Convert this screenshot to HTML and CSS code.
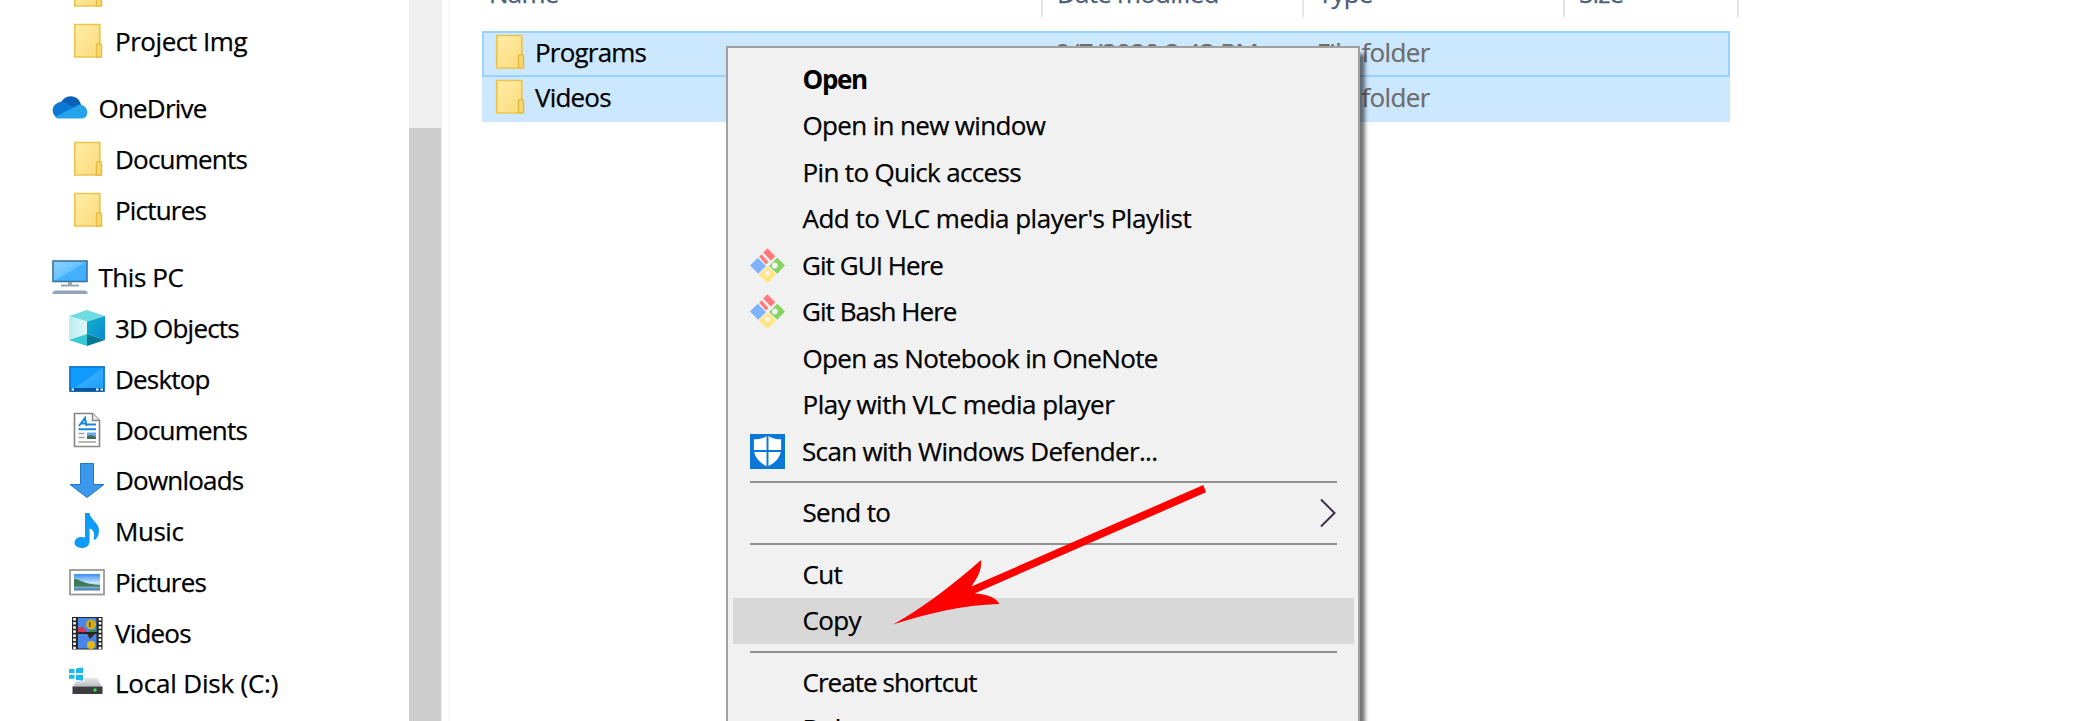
FILE: index.html
```html
<!DOCTYPE html>
<html lang="en">
<head>
<meta charset="utf-8">
<title>File Explorer</title>
<link rel="stylesheet" href="styles.css">
</head>
<body>
<svg width="0" height="0" class="defs">
  <defs>
    <linearGradient id="gFolder" x1="0" y1="0" x2="1" y2="1"><stop offset="0" stop-color="#ffeca6"/><stop offset="1" stop-color="#fbdc7c"/></linearGradient>
    <linearGradient id="gScreen" x1="0" y1="0" x2="1" y2="1"><stop offset="0" stop-color="#8fd4ff"/><stop offset=".5" stop-color="#66c2ff"/><stop offset=".51" stop-color="#45b2ff"/><stop offset="1" stop-color="#3cabfa"/></linearGradient>
    <linearGradient id="gDesk" x1="0" y1="0" x2="1" y2="1"><stop offset="0" stop-color="#109bff"/><stop offset=".5" stop-color="#109bff"/><stop offset=".51" stop-color="#33aaff"/><stop offset="1" stop-color="#1a9dfb"/></linearGradient>
    <linearGradient id="gSky" x1="0" y1="0" x2="0" y2="1"><stop offset="0" stop-color="#3d8cf5"/><stop offset=".55" stop-color="#c9e6fa"/><stop offset="1" stop-color="#3f78a8"/></linearGradient>
    <linearGradient id="gDisk" x1="0" y1="0" x2="0" y2="1"><stop offset="0" stop-color="#e4e5e8"/><stop offset="1" stop-color="#b9bbc0"/></linearGradient>
    <linearGradient id="gCubeL" x1="0" y1="0" x2="1" y2="0"><stop offset="0" stop-color="#b9ecef"/><stop offset="1" stop-color="#e2f7f7"/></linearGradient>
    <linearGradient id="gCubeR" x1="0" y1="0" x2="1" y2="1"><stop offset="0" stop-color="#10b4cf"/><stop offset="1" stop-color="#0a86cf"/></linearGradient>
    <symbol id="folder" viewBox="0 0 36 36"><path d="M5.800 1.500h25v32.500h-25z" fill="url(#gFolder)" stroke="#eac54f" stroke-width="1.700"/><path d="M27.500 34V22.500q0-2 2.500-2t2.500 2V34z" fill="#f7d873" stroke="#e6bd40" stroke-width="1.500"/></symbol>
    <symbol id="cloud" viewBox="0 0 36 36"><path d="M8 15C11 4 26 3 29 15L22 22z" fill="#0a5fb8"/><path d="M6 28C-2 25-1 13 9 12c5 0 8 2 12 5l8 11z" fill="#0a78d4"/><path d="M3 27L24 16c2-1.500 5-1.500 7-.5 6 3 6 12-1 13H7c-2 0-3-.7-4-1.500z" fill="#23a3ea"/></symbol>
    <symbol id="pc" viewBox="0 0 36 36"><rect x="1" y="2" width="34" height="20.500" fill="url(#gScreen)" stroke="#39749c" stroke-width="1.600"/><path d="M16 23h4v2.500h7v2H9v-2h7z" fill="#95a5b5"/><path d="M3 31.500h30l2.500 1.500v2H.5v-2z" fill="#92a3bc"/></symbol>
    <symbol id="cube" viewBox="0 0 36 36"><path d="M18 0l18 6-18 5.500L0 6z" fill="#6fdbde"/><path d="M0 6l18 5.500V24L0 30z" fill="url(#gCubeL)"/><path d="M36 6l-18 5.500V24l18 6z" fill="url(#gCubeR)"/><path d="M0 30l18-6v12z" fill="#38c8d8"/><path d="M36 30l-18-6v12z" fill="#067a94"/></symbol>
    <symbol id="desktop" viewBox="0 0 36 36"><rect x=".9" y="5.900" width="34.200" height="24.200" fill="url(#gDesk)" stroke="#0a74cc" stroke-width="1.600"/><path d="M1 27h34v3.500H1z" fill="#07559c"/><path d="M2.500 27.500h2.500v2H2.500zM27 27.500h2.500v2H27zM31.500 27.500h2.500v2h-2.500z" fill="#fff"/></symbol>
    <symbol id="doc" viewBox="0 0 36 36"><path d="M5.500 1.500h18l7 7v26h-25z" fill="#fff" stroke="#858585" stroke-width="1.600"/><path d="M23.500 1.500v7h7" fill="#eee" stroke="#858585" stroke-width="1.400"/><path d="M10 14l6-8 1.500 8M12 11.500h5M18 12.500h9M9.500 17.200h17.500" stroke="#1987d8" stroke-width="2" fill="none"/><path d="M9.500 21.500h6M9.500 25.500h6M9.500 30h17.500" stroke="#a0a0a0" stroke-width="1.300"/><path d="M18 20.500h9V27h-9z" fill="#6aa8f2"/><path d="M18 24l4-1 5 2v2h-9z" fill="#3d7054"/></symbol>
    <symbol id="down" viewBox="0 0 36 36"><path d="M11.500 1.500h13v21H35L18 35.500 1 22.500h10.500z" fill="#3b98ea" stroke="#2277c4" stroke-width="1"/></symbol>
    <symbol id="music" viewBox="0 0 36 36"><path d="M16 0h4.500c1 7 9 9 9.500 17 .2 5-2 8-4 10l-1.500-.8c1.500-5.200.5-9.700-4-10.700v13c0 9-15.500 8-15 1 .5-5 6-6.500 10.500-5z" fill="#0b9cfb"/></symbol>
    <symbol id="pics" viewBox="0 0 36 36"><rect x="1" y="6" width="34" height="24.500" fill="#fff" stroke="#999" stroke-width="1.800"/><path d="M5 10h26v16.500H5z" fill="url(#gSky)"/><path d="M5 15c6 0 9 5 26 6v1.500H5z" fill="#3d7a55"/></symbol>
    <symbol id="video" viewBox="0 0 36 36"><path d="M3 2h30.500v32.500H3z" fill="#262626"/><path d="M5.500 3v31M31 3v31" stroke="#fff" stroke-width="2.600" stroke-dasharray="2.500 1.600"/><path d="M9 3h18.500v14H9zM9 19h18.500v14.500H9z" fill="#4a86e8"/><path d="M9 13q5-3 9 4H9z" fill="#d43a4e"/><circle cx="22" cy="9.500" r="5" fill="#d2ae16"/><path d="M20 15h7.500v2H20z" fill="#2f8f49"/><path d="M18 19h8l-5 5z" fill="#3a2a1a"/><circle cx="22" cy="30" r="4" fill="#e0b818"/><path d="M20 7v5h1.500V7z" fill="#6b3a08"/></symbol>
    <symbol id="disk" viewBox="0 0 36 36"><path d="M0 4h5.500v4H0zM7 3.500l7-1V8H7zM0 9.800h5.500v4H0zM7 9.800h7v6l-7-1z" fill="#16b9f2"/><path d="M15.500 13h12.500l5 9H3.500l3.500-5.500 8.500 0z" fill="url(#gDisk)"/><path d="M3.500 21.500h30V29h-30z" fill="#3b3d40"/><path d="M3.500 21h30v1h-30z" fill="#888"/><circle cx="26" cy="25" r="1.700" fill="#38e04a"/></symbol>
    <symbol id="git" viewBox="0 0 36 36"><path d="M13.500 4.500L18 .3 26 8.500l-4.500 4.500z" fill="#ff7b7b"/><path d="M9.500 9l2.500-2.500 7 8-2.500 2.500z" fill="#ff7b7b"/><path d="M0 18l8-8 8.500 8.500L8.500 26.500z" fill="#80b3ff"/><path d="M36 18l-8-8-8.500 8.500 8.500 8z" fill="#87d35f"/><path d="M18 36l9-9-9-8-9 8.500z" fill="#ffe680"/><circle cx="25.500" cy="18" r="3" fill="#f1f1f1"/><circle cx="18" cy="26" r="2.800" fill="#f1f1f1"/></symbol>
    <symbol id="shield" viewBox="0 0 36 36"><path d="M0 0h36v36H0z" fill="#0a78d7"/><path d="M18 1.500c4 3 9 4 14 4v10c0 8-6 14.500-14 18C10 30 4 23.500 4 15.500v-10c5 0 10-1 14-4z" fill="#fff"/><path d="M18 0v35M3 17.500h30" stroke="#0a78d7" stroke-width="2"/></symbol>
  </defs>
</svg>
<div class="window">
  <nav class="tree">
    <div class="node child"><svg class="icon"><use href="#folder"/></svg><span class="first">Demo</span></div>
    <div class="node child"><svg class="icon"><use href="#folder"/></svg><span class="loose">Project Img</span></div>
    <div class="node root"><svg class="icon"><use href="#cloud"/></svg><span>OneDrive</span></div>
    <div class="node child"><svg class="icon"><use href="#folder"/></svg><span>Documents</span></div>
    <div class="node child"><svg class="icon"><use href="#folder"/></svg><span>Pictures</span></div>
    <div class="node root"><svg class="icon"><use href="#pc"/></svg><span class="loose">This PC</span></div>
    <div class="node child"><svg class="icon"><use href="#cube"/></svg><span>3D Objects</span></div>
    <div class="node child"><svg class="icon"><use href="#desktop"/></svg><span>Desktop</span></div>
    <div class="node child"><svg class="icon"><use href="#doc"/></svg><span>Documents</span></div>
    <div class="node child"><svg class="icon"><use href="#down"/></svg><span>Downloads</span></div>
    <div class="node child"><svg class="icon"><use href="#music"/></svg><span class="loose">Music</span></div>
    <div class="node child"><svg class="icon"><use href="#pics"/></svg><span>Pictures</span></div>
    <div class="node child"><svg class="icon"><use href="#video"/></svg><span>Videos</span></div>
    <div class="node child"><svg class="icon"><use href="#disk"/></svg><span class="loosest">Local Disk (C:)</span></div>
  </nav>
  <div class="scrollbar"><div class="thumb"></div></div>
  <main class="files">
    <div class="head cols"><span>Name</span><span>Date modified</span><span>Type</span><span>Size</span></div>
    <div class="file cols focused"><span class="name"><svg class="icon"><use href="#folder"/></svg><b>Programs</b></span><span>9/7/2020 2:43 PM</span><span>File folder</span></div>
    <div class="file cols"><span class="name"><svg class="icon"><use href="#folder"/></svg><b>Videos</b></span><span>9/7/2020 2:43 PM</span><span>File folder</span></div>
  </main>
</div>
<div class="menu">
  <div class="item default">Open</div>
  <div class="item">Open in new window</div>
  <div class="item">Pin to Quick access</div>
  <div class="item wide">Add to VLC media player's Playlist</div>
  <div class="item tight"><svg class="icon"><use href="#git"/></svg>Git GUI Here</div>
  <div class="item tight"><svg class="icon"><use href="#git"/></svg>Git Bash Here</div>
  <div class="item">Open as Notebook in OneNote</div>
  <div class="item wide">Play with VLC media player</div>
  <div class="item"><svg class="icon"><use href="#shield"/></svg>Scan with Windows Defender...</div>
  <hr>
  <div class="item">Send to<svg class="chevron" viewBox="0 0 18 30"><path d="M2 1.500L15.500 15 2 28.500" fill="none" stroke="#3c3048" stroke-width="2"/></svg></div>
  <hr>
  <div class="item">Cut</div>
  <div class="item hover">Copy</div>
  <hr>
  <div class="item tight">Create shortcut</div>
  <div class="item">Delete</div>
</div>
<svg class="arrow" viewBox="0 0 320 150"><path d="M310.300 5L78.500 106.500C84 98 89 91 88 80C61 104 31 127 0 144.500C35 133.500 69 125 106.500 124C102 116 91 114 81.500 113.500L313 12.300z" fill="#f00"/></svg>
</body>
</html>
```
FILE: styles.css
```css
* { box-sizing: border-box; }
body {
  margin: 0;
  width: 2097px;
  height: 721px;
  position: relative;
  overflow: hidden;
  background: #fff;
  color: #000;
  font: 26px "Open Sans", "Noto Sans", sans-serif;
  letter-spacing: -0.8px;
  white-space: nowrap;
  -webkit-text-stroke: 0.25px currentColor;
}
.defs { position: absolute; }
.icon { width: 36px; height: 36px; flex: none; -webkit-text-stroke: 0; }
.window { display: flex; height: 721px; overflow: hidden; }

.tree { width: 409px; height: 756px; flex: none; margin-top: -35px; }
.node { display: flex; align-items: center; height: 50.75px; }
.child { padding-left: 69px; gap: 10px; }
.root { padding-left: 51.500px; gap: 11px; margin-top: 16.600px; }
.first { padding-bottom: 2px; color: #777; }
.loose { letter-spacing: -0.45px; }
.loosest { letter-spacing: -0.2px; }

.scrollbar { width: 33px; height: 721px; flex: none; background: #f0f0f0; padding-top: 128px; }
.thumb { width: 32px; height: 100%; background: #cdcdcd; }

.files { margin-left: 6px; padding-left: 34px; border-left: 2px solid #f8f8f8; flex: 1; }
.cols { display: grid; grid-template-columns: 559px 261px 261px 174px; width: 1255px; }
.head { height: 31px; color: #4c607a; }
.head span { height: 17px; border-right: 2px solid #e5e5e5; line-height: 36px; padding: 0 0 6px 14px; display: flex; align-items: flex-end; }
.head span:first-child { padding-left: 5px; }
.file { width: 1248px; height: 45px; margin-left: -2px; padding-bottom: 5px; background: #cce8ff; color: #6d6d6d; align-items: center; letter-spacing: -0.6px; }
.focused { border: 2px solid #99d1ff; height: 46px; padding-bottom: 4px; }
.file span { padding: 0 0 0 14.500px; }
.focused span { padding-left: 12.500px; }
.file .name { padding: 0 0 0 9px; display: flex; align-items: center; gap: 8px; color: #000; letter-spacing: -0.8px; }
.focused .name { padding-left: 7px; }
.name b { font-weight: 400; }

.menu {
  position: absolute; left: 726px; top: 46px; width: 634px; height: 675px;
  overflow: hidden;
  background: #f1f1f1; border: 2px solid #a0a0a0; border-bottom: 0;
  box-shadow: 5px 8px 4px rgba(0,0,0,.55);
  padding: 8px 4px 0 5px;
}
.item { display: flex; align-items: center; height: 46.500px; padding: 0 0 1px 69.500px; letter-spacing: -0.65px; }
.item .icon { margin: 1px 17.500px 0 -53px; width: 35px; height: 35px; }
.default { font-weight: 700; letter-spacing: -1.3px; -webkit-text-stroke: 0; }
.tight { letter-spacing: -0.95px; }
.wide { letter-spacing: -0.5px; }
.hover { background: #d8d8d8; }
.chevron { width: 18px; height: 30px; margin: 1px 17px 0 auto; }
.menu hr { border: 0; height: 2px; background: #919191; margin: 6.500px 17px; }
.arrow { position: absolute; left: 893px; top: 480px; width: 320px; height: 150px; }
```
